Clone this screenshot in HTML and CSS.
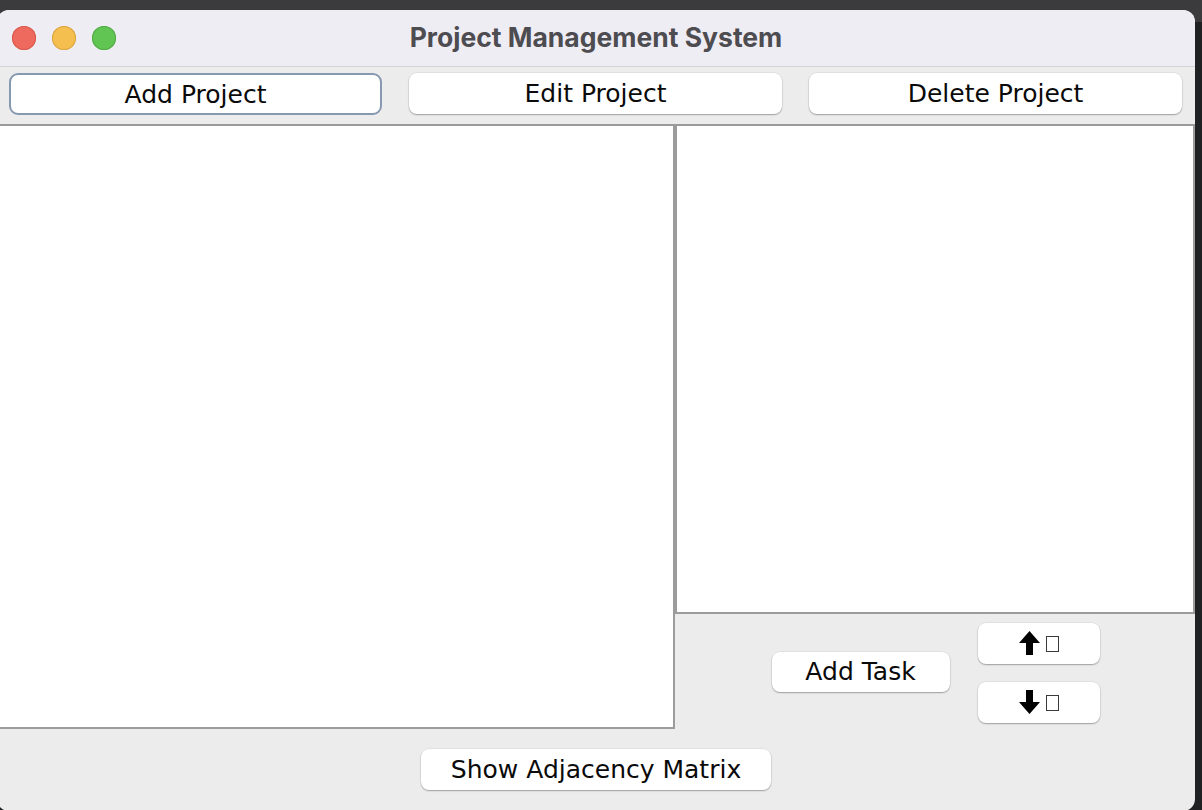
FILE: index.html
```html
<!DOCTYPE html>
<html lang="en">
<head>
<meta charset="utf-8">
<title>Project Management System</title>
<link rel="stylesheet" href="styles.css">
</head>
<body>
<div class="window">
  <header class="titlebar">
    <div class="lights">
      <span class="light red"></span>
      <span class="light yellow"></span>
      <span class="light green"></span>
    </div>
    <div class="title">Project Management System</div>
    <div></div>
  </header>
  <nav class="toolbar">
    <button class="btn focused">Add Project</button>
    <button class="btn">Edit Project</button>
    <button class="btn">Delete Project</button>
  </nav>
  <main class="main">
    <section class="projects"></section>
    <section class="right">
      <div class="tasks"></div>
      <div class="task-actions">
        <button class="btn add-task">Add Task</button>
        <div class="moves">
          <button class="btn move"><svg class="arrow" width="21" height="24" viewBox="0 0 21 24"><polygon points="10.5,0 21,12 14,12 14,24 7,24 7,12 0,12" fill="#000"/></svg><span class="tofu"></span></button>
          <button class="btn move"><svg class="arrow" width="21" height="24" viewBox="0 0 21 24"><polygon points="10.5,24 21,12 14,12 14,0 7,0 7,12 0,12" fill="#000"/></svg><span class="tofu"></span></button>
        </div>
      </div>
    </section>
  </main>
  <footer class="footer">
    <button class="btn matrix">Show Adjacency Matrix</button>
  </footer>
</div>
</body>
</html>
```
FILE: styles.css
```css
* { box-sizing: border-box; }
html, body { margin: 0; padding: 0; }
body {
  width: 1202px;
  height: 810px;
  overflow: hidden;
  background: linear-gradient(to bottom, #3b3b3e 0, #3b3b3e 22px, #202123 22px);
  font-family: "DejaVu Sans", "Liberation Sans", sans-serif;
}
.window {
  width: 1198px;
  height: 801px;
  margin: 10px 0 0 -3px;
  border-radius: 12px;
  overflow: hidden;
  background: #ececec;
  display: flex;
  flex-direction: column;
}
.titlebar {
  height: 57px;
  flex: none;
  background: #efedf4;
  border-bottom: 1px solid #d3d2d7;
  display: grid;
  grid-template-columns: 1fr auto 1fr;
  align-items: center;
}
.lights {
  display: flex;
  gap: 16px;
  padding-left: 15px;
}
.light {
  width: 24px;
  height: 24px;
  border-radius: 50%;
  display: block;
}
.red { background: #ee6a5e; box-shadow: inset 0 0 0 1px #d8574c; }
.yellow { background: #f5bf4f; box-shadow: inset 0 0 0 1px #d9a43f; }
.green { background: #61c554; box-shadow: inset 0 0 0 1px #51a944; }
.title {
  font-family: "Inter", "Liberation Sans", sans-serif;
  font-weight: 700;
  font-size: 26.5px;
  color: #4d4c50;
  padding-bottom: 3px;
}
.toolbar {
  height: 57px;
  flex: none;
  padding: 6px 13px 0 12px;
  display: grid;
  grid-template-columns: repeat(3, 1fr);
  column-gap: 27px;
  align-items: start;
}
.btn {
  font-family: "DejaVu Sans", "Liberation Sans", sans-serif;
  font-size: 25px;
  color: #0a0a0a;
  background: #fff;
  border: none;
  border-radius: 8px;
  box-shadow: 0 0 0 0.5px rgba(0,0,0,0.08), 0 1px 1.5px rgba(0,0,0,0.3);
  height: 41px;
  padding: 0;
  display: flex;
  align-items: center;
  justify-content: center;
}
.btn.focused {
  height: 42px;
  border: 2px solid #8799b0;
  border-radius: 9px;
  box-shadow: none;
}
.main {
  height: 605px;
  flex: none;
  border-top: 2px solid #9a9a9a;
  display: grid;
  grid-template-columns: 678px 1fr;
}
.projects {
  background: #fff;
  border-right: 2px solid #9c9c9c;
  border-bottom: 2px solid #9c9c9c;
}
.right {
  display: flex;
  flex-direction: column;
}
.tasks {
  height: 488px;
  flex: none;
  background: #fff;
  border-left: 2px solid #9c9c9c;
  border-right: 2px solid #9c9c9c;
  border-bottom: 2px solid #9c9c9c;
}
.task-actions {
  flex: 1;
  display: flex;
  align-items: center;
  justify-content: center;
  gap: 28px;
  padding: 0 0 0 1px;
}
.add-task {
  width: 178px;
  height: 40px;
}
.moves {
  display: flex;
  flex-direction: column;
  gap: 18px;
  margin-top: 2px;
}
.move {
  width: 122px;
  height: 41px;
  gap: 6px;
}
.arrow { display: block; }
.tofu {
  display: block;
  width: 13px;
  height: 16px;
  border: 1px solid #3a3a3a;
  margin-top: 2px;
}
.footer {
  flex: 1;
  display: flex;
  justify-content: center;
  align-items: flex-start;
  padding-top: 20px;
}
.matrix {
  width: 350px;
  height: 41px;
}
```
